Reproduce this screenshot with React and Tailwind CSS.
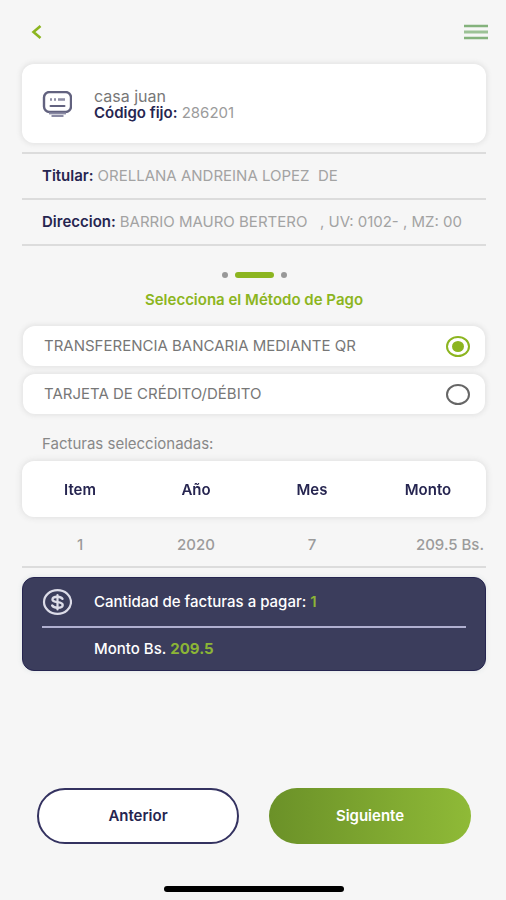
import React, { useState } from "react";

const methods = [
  { id: "qr", label: "TRANSFERENCIA BANCARIA MEDIANTE QR" },
  { id: "card", label: "TARJETA DE CRÉDITO/DÉBITO" },
];

const invoices = [{ item: 1, year: 2020, month: 7, amount: "209.5 Bs." }];

const MeterIcon = () => (
  <svg
    className="w-[30px] h-[26px]"
    viewBox="0 0 30 26"
    fill="none"
    stroke="#62627f"
    aria-hidden="true"
  >
    <rect x="2" y="1" width="27" height="20" rx="5.5" strokeWidth="2.4" />
    <path d="M8 8.5h2M12 8.5h2M16 8.5h7" strokeWidth="2.6" stroke="#8c8ca4" />
    <path d="M8.5 15h14" strokeWidth="2" strokeLinecap="round" />
    <path d="M7 22.4h17" strokeWidth="2" stroke="#8a8aa4" />
    <path d="M9.5 25h12" strokeWidth="2" stroke="#8a8aa4" />
  </svg>
);

const DollarIcon = () => (
  <svg
    className="w-[30px] h-[26px]"
    viewBox="0 0 30 26"
    fill="none"
    stroke="#dcdce8"
    strokeLinecap="round"
    aria-hidden="true"
  >
    <ellipse cx="15.5" cy="13" rx="13.5" ry="11.8" strokeWidth="2.2" />
    <path
      d="M20.5 9.8C19.5 8.3 17.7 7.7 15.5 7.7c-2.8 0-5 .9-5 2.7s2.2 2.3 5 2.7 5.2.9 5.2 2.8-2.3 2.8-5.2 2.8c-2.4 0-4.3-.7-5.3-2.2"
      strokeWidth="2.4"
    />
    <path d="M15.5 6v14.5" strokeWidth="2.2" />
  </svg>
);

const App = () => {
  const [method, setMethod] = useState("qr");

  return (
    <div className="min-h-screen flex flex-col bg-[#f6f6f6] pl-[22px] pr-5 pb-2 text-[15px] leading-5 text-[#9b9b9b] font-['Inter','Liberation_Sans',sans-serif]">
      <header className="h-16 shrink-0 flex items-center justify-between">
        <button type="button" aria-label="Volver" className="p-2">
          <svg
            className="w-3 h-4"
            viewBox="0 0 12 16"
            fill="none"
            stroke="#8cb520"
            strokeWidth="2.6"
            aria-hidden="true"
          >
            <path d="M10.5 2L3.5 8l7 6" />
          </svg>
        </button>
        <button type="button" aria-label="Menú" className="-mr-0.5">
          <svg
            className="w-6 h-4"
            viewBox="0 0 24 16"
            stroke="#84b27c"
            strokeWidth="2.4"
            aria-hidden="true"
          >
            <path d="M0 2h24M0 14h24" />
            <path d="M0 8h24" stroke="#9cc296" strokeWidth="3" />
          </svg>
        </button>
      </header>

      {/* Account */}
      <section className="h-[79px] shrink-0 flex items-center gap-[22px] px-5 rounded-xl bg-white shadow-[0_0_4px_2px_#e6e6e6]">
        <MeterIcon />
        <div>
          <p className="text-base leading-[18px] text-[#777]">casa juan</p>
          <p className="leading-4">
            <strong className="font-semibold text-[#262550]">
              Código fijo:
            </strong>{" "}
            286201
          </p>
        </div>
      </section>

      <dl className="mt-[9px] border-t-2 border-[#dcdcdc]">
        <div className="h-[46px] flex items-center gap-1 px-5 border-b-2 border-[#dcdcdc]">
          <dt className="font-semibold text-[#262550]">Titular:</dt>
          <dd className="whitespace-pre text-[#a3a3a3]">
            ORELLANA ANDREINA LOPEZ{"  "}DE
          </dd>
        </div>
        <div className="h-[46px] flex items-center gap-1 px-5 border-b-2 border-[#dcdcdc]">
          <dt className="font-semibold text-[#262550]">Direccion:</dt>
          <dd className="whitespace-pre text-[#a3a3a3]">
            BARRIO MAURO BERTERO{"   "}, UV: 0102- , MZ: 00
          </dd>
        </div>
      </dl>

      {/* Step indicator */}
      <div className="mt-[26px] flex items-center justify-center gap-[7px]">
        <span className="w-1.5 h-1.5 rounded-full bg-[#989898]" />
        <span className="w-[39px] h-1.5 rounded-full bg-[#8cb520]" />
        <span className="w-1.5 h-1.5 rounded-full bg-[#989898]" />
      </div>

      <fieldset className="mt-3">
        <legend className="w-full text-center font-semibold text-[#8cb520]">
          Selecciona el Método de Pago
        </legend>
        <div className="mt-4 mx-px flex flex-col gap-2">
          {methods.map((m) => (
            <label
              key={m.id}
              className="h-10 flex items-center justify-between pl-[21px] pr-[15px] rounded-xl bg-white text-[#777] shadow-[0_0_4px_2px_#e6e6e6]"
            >
              {m.label}
              <input
                type="radio"
                name="method"
                value={m.id}
                checked={method === m.id}
                onChange={() => setMethod(m.id)}
                className="appearance-none w-6 h-[21px] grid place-content-center rounded-[50%] border-2 border-[#666] checked:border-[#8cb520] checked:before:block checked:before:w-3 checked:before:h-[11px] checked:before:rounded-[50%] checked:before:bg-[#8cb520]"
              />
            </label>
          ))}
        </div>
      </fieldset>

      <h2 className="mt-5 px-5 text-[#888]">Facturas seleccionadas:</h2>
      <table className="mt-[7px] w-full table-fixed border-separate border-spacing-0">
        <thead className="drop-shadow-[0_0_3px_#d8d8d8]">
          <tr className="h-14 text-[#262550]">
            <th className="pt-0.5 bg-white rounded-l-xl font-semibold">Item</th>
            <th className="pt-0.5 bg-white font-semibold">Año</th>
            <th className="pt-0.5 bg-white font-semibold">Mes</th>
            <th className="pt-0.5 bg-white rounded-r-xl font-semibold">
              Monto
            </th>
          </tr>
        </thead>
        <tbody>
          {invoices.map((inv) => (
            <tr key={inv.item} className="h-[51px] text-center font-medium">
              <td className="pt-1.5 border-b-2 border-[#dcdcdc]">{inv.item}</td>
              <td className="pt-1.5 border-b-2 border-[#dcdcdc]">{inv.year}</td>
              <td className="pt-1.5 border-b-2 border-[#dcdcdc]">
                {inv.month}
              </td>
              <td className="pt-1.5 pr-0.5 border-b-2 border-[#dcdcdc] text-right">
                {inv.amount}
              </td>
            </tr>
          ))}
        </tbody>
      </table>

      {/* Totals */}
      <section className="mt-[9px] px-[19px] rounded-xl border border-[#262550] bg-[#3b3d5c] font-medium text-white shadow-[0_0_4px_1px_#e6eaea]">
        <div className="h-[50px] flex items-center gap-[22px] border-b-2 border-[#b0b0d0]">
          <DollarIcon />
          <p>
            Cantidad de facturas a pagar:{" "}
            <strong className="font-semibold text-[#8cb536]">1</strong>
          </p>
        </div>
        <p className="h-[42px] flex items-center gap-1 pl-[52px]">
          Monto Bs.
          <strong className="font-bold text-[#8cb536]">209.5</strong>
        </p>
      </section>

      <div className="mt-auto pt-8 px-[15px] grid grid-cols-2 gap-[30px] font-semibold">
        <button
          type="button"
          className="h-14 rounded-full border-2 border-[#343260] bg-white text-[#262550]"
        >
          Anterior
        </button>
        <button
          type="button"
          className="h-14 rounded-full bg-linear-to-r from-[#6b9128] to-[#8fba37] text-white"
        >
          Siguiente
        </button>
      </div>
      <div className="mt-[42px] mx-auto w-[180px] h-1.5 rounded-full bg-black" />
    </div>
  );
};

export default App;
